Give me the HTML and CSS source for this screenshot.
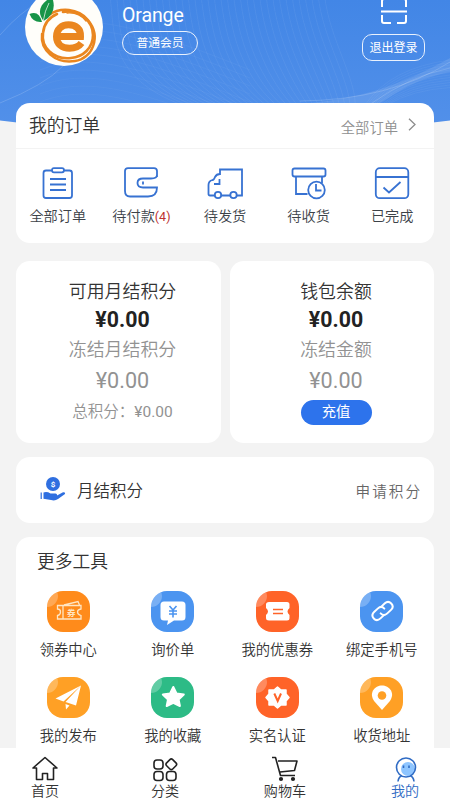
FILE: index.html
```html
<!DOCTYPE html>
<html lang="zh-CN">
<head>
<meta charset="utf-8">
<title>我的</title>
<link rel="stylesheet" href="styles.css">
</head>
<body>
<div class="page">
  <header class="hero">
    <svg class="hero-bg" viewBox="0 0 450 130" preserveAspectRatio="none">
      <defs>
        <linearGradient id="sky" x1="0" y1="0" x2="0" y2="1"><stop offset="0" stop-color="#4286e6"/><stop offset="1" stop-color="#5592ea"/></linearGradient>
        <clipPath id="dome"><path d="M0 0H450V120.500Q225 150 0 120.500Z"/></clipPath>
      </defs>
      <g clip-path="url(#dome)">
        <rect width="450" height="150" fill="url(#sky)"/>
        <g id="waves" fill="none" stroke="#fff" stroke-width=".6"></g>
        <path d="M310 103C360 98 400 86 450 58V72C410 80 390 98 375 106Z" fill="#fff" opacity=".1"/>
        <path d="M0 35Q20 12 42 0M0 103Q45 85 63 66M300 101Q390 100 450 62M372 103Q410 76 450 68" fill="none" stroke="#fff" stroke-width=".8" opacity=".2"/>
      </g>
    </svg>
    <div class="hero-row">
      <svg class="avatar" viewBox="0 0 78 78">
        <circle cx="39" cy="39" r="39" fill="#fffefa"/>
        <g fill="none" stroke="#ea861f" stroke-linecap="round">
          <path d="M24 27C35 19 53 20 63 32C77 49 67 71 50 73C30 76 15 62 17 46" stroke-width="2.4"/>
          <path d="M38 24C54 21 68 33 68 47C68 60 58 69 46 70C28 72 16 59 18 45C19 35 25 29 32 26" stroke-width="2.6"/>
          <path d="M57 70L65 65M42 25Q54 24 61 33" stroke-width="1.300"/>
          <path d="M33 48.500H55.500C56 41 51 36.800 43.500 36.800C36.500 36.800 31.500 41.500 31.500 48.500C31.500 56 37 60.300 44.500 60.300C50 60.300 54 58.500 56.500 55" stroke-width="7" stroke-linecap="butt"/>
        </g>
        <path d="M18.500 33C11.500 24 15 15 27 9Q33 25 18.500 33Z" fill="#189447"/>
        <path d="M4.500 26Q14 22 17 34Q8 35 4.500 26Z" fill="#189447"/>
        <path d="M18 34Q20 22 24 15" stroke="#fff" stroke-width=".7" fill="none"/>
      </svg>
      <div class="who"><div class="name">Orange</div><div class="level">普通会员</div></div>
      <div class="actions">
        <svg class="scan" viewBox="0 0 26 26" fill="none" stroke="#fff" stroke-width="2"><path d="M1 9V3Q1 1 3 1H10M16 1H23Q25 1 25 3V9M1 17V23Q1 25 3 25H10M16 25H23Q25 25 25 23V17M0 13.500H26"/></svg>
        <div class="logout">退出登录</div>
      </div>
    </div>
  </header>

  <section class="card orders">
    <div class="orders-head"><span class="title">我的订单</span><span class="more">全部订单<svg class="chev" viewBox="0 0 8 13" fill="none" stroke="#8d8d8d" stroke-width="1.300"><path d="M1 .8L7 6.500L1 12.200"/></svg></span></div>
    <div class="orders-grid">
      <div class="order"><svg viewBox="0 0 36 34"><path d="M12 4.500H6Q3.500 4.500 3.500 7V29.500Q3.500 32 6 32H29.500Q32 32 32 29.500V7Q32 4.500 29.500 4.500H24M14 2.200H22Q24 2.200 24 4.200T22 6.300H14Q12 6.300 12 4.200T14 2.200ZM10 13H26M10 18.500H26M10 24H26"/></svg><span>全部订单</span></div>
      <div class="order"><svg viewBox="0 0 36 34"><path d="M34 11V5Q34 2.200 31 2.200H5Q2 2.200 2 5V25Q2 30.500 7 30.500H25Q34 30.500 34 21.500Q32 21.500 29 21.500H20Q14.500 21.500 14.500 17T20 12.500H28Q34 12.500 34 9M20 15.500V18.500"/></svg><span>待付款<i>(4)</i></span></div>
      <div class="order"><svg viewBox="0 0 36 34"><path d="M8 29.500H3Q1.500 29.500 1.500 28V19Q1.500 15 5.500 14Q7 14 8 11Q9.500 8 13 8M13 9V3.500H35V29.500H30M23 29.500H14M12.500 13V18H7"/><circle cx="11" cy="29" r="3.200"/><circle cx="26.500" cy="29" r="3.200"/></svg><span>待发货</span></div>
      <div class="order"><svg viewBox="0 0 36 34"><path d="M3.500 2.500H32.500Q34.500 2.500 34.500 4.500V8.500Q34.500 10.500 32.500 10.500H3.500Q1.500 10.500 1.500 8.500V4.500Q1.500 2.500 3.500 2.500ZM5 10.500V28H16.500M31 10.500V17"/><circle cx="25.500" cy="24" r="8.300"/><path d="M25 18V24.500H30.500"/></svg><span>待收货</span></div>
      <div class="order"><svg viewBox="0 0 36 34"><rect x="1.800" y="2.200" width="32.500" height="30" rx="4"/><path d="M2 11H34M9.500 21.500L15 26.500L26.500 16"/></svg><span>已完成</span></div>
    </div>
  </section>

  <div class="balances">
    <section class="card balance">
      <div class="b-label">可用月结积分</div><div class="b-main">¥0.00</div>
      <div class="b-label dim">冻结月结积分</div><div class="b-sub">¥0.00</div>
      <div class="b-total">总积分：<span class="amount">¥0.00</span></div>
    </section>
    <section class="card balance">
      <div class="b-label">钱包余额</div><div class="b-main">¥0.00</div>
      <div class="b-label dim">冻结金额</div><div class="b-sub">¥0.00</div>
      <div class="topup">充值</div>
    </section>
  </div>

  <section class="card credit">
    <svg class="hand" viewBox="0 0 26 24" fill="#2f6fe0"><circle cx="13" cy="7" r="7"/><path d="M3.500 15.500Q7 14.300 10.500 16.500H15.500Q17.500 16.800 17 18.500L23 15.200Q25.500 14.800 25 17L18 22Q15 24.200 11 23L3.500 21.800ZM.6 15.500H1.800V22H.6Z"/><text x="13" y="10" font-size="8" font-weight="700" fill="#fff" text-anchor="middle">$</text></svg>
    <span class="credit-name">月结积分</span><span class="apply">申请积分</span>
  </section>

  <section class="card tools">
    <div class="title">更多工具</div>
    <div class="tools-grid">
      <div class="tool"><div class="tile orange"><svg viewBox="0 0 43 41"><g fill="none" stroke="#ffe6c4" stroke-width="1.300"><path d="M10.500 14.500H34V18Q30.500 18.500 30.500 21T34 24.500V28H10.500V24.500Q13.500 24 13.500 21T10.500 18ZM16 15V28M17 14L31 10.500L32.500 14"/></g><text x="24.300" y="25" font-size="8.500" font-weight="700" fill="#ffe6c4" text-anchor="middle">券</text></svg></div><span>领券中心</span></div>
      <div class="tool"><div class="tile blue"><svg viewBox="0 0 43 41"><path d="M13 10.500H31Q34.500 10.500 34.500 14V26Q34.500 29.500 31 29.500H23L16 34L17 29.500H13Q9.500 29.500 9.500 26V14Q9.500 10.500 13 10.500Z" fill="#fff"/><path d="M18.500 15L22 19L25.500 15M22 19V26.500M18 20H26M18 23H26" fill="none" stroke="#4b94f0" stroke-width="1.600"/></svg></div><span>询价单</span></div>
      <div class="tool"><div class="tile red"><svg viewBox="0 0 43 41"><path d="M13 11H31Q33.500 11 33.500 13.500V17Q29.500 20.500 33.500 24V27Q33.500 29.500 31 29.500H13Q10 29.500 10 27V24Q14 20.500 10 17V13.500Q10 11 13 11Z" fill="#fff"/><path d="M17 18.500H27M17 22.500H27" stroke="#ff6328" stroke-width="1.300"/></svg></div><span>我的优惠券</span></div>
      <div class="tool"><div class="tile blue"><svg viewBox="0 0 43 41"><g transform="rotate(-43 22.500 20)" fill="none" stroke="#fff" stroke-width="2" stroke-linecap="round"><path d="M20 24H16Q11 24 11 19.500T16 15H21Q25.500 15 25.500 19.500"/><path d="M25 16H29.500Q34 16 34 20.500T29.500 25H24Q19.500 25 19.500 20.500"/></g></svg></div><span>绑定手机号</span></div>
      <div class="tool"><div class="tile amber"><svg viewBox="0 0 43 41" fill="#fff"><path d="M34 8.500L8.500 21.500L16.500 24.500ZM34 8.500L18.500 25L29 28.500ZM18.500 27L22.500 28.500L19 32.500Z"/></svg></div><span>我的发布</span></div>
      <div class="tool"><div class="tile green"><svg viewBox="0 0 43 41"><path d="M22.300 10L25.500 16.500L32.800 17.600L27.600 22.500L28.900 29L22.300 25.800L15.700 29L17 22.500L11.800 17.600L19.100 16.500Z" fill="#fff" stroke="#fff" stroke-width="2" stroke-linejoin="round"/></svg></div><span>我的收藏</span></div>
      <div class="tool"><div class="tile red"><svg viewBox="0 0 43 41"><path d="M21.500 10L25 13H30V17L33 20.500L30 24V28H25L21.500 31L18 28H13V24L10 20.500L13 17V13H18Z" fill="#fff" stroke="#fff" stroke-width="1.500" stroke-linejoin="round"/><path d="M18.300 16.500L21.700 24L25 16.500" fill="none" stroke="#ff6328" stroke-width="2"/></svg></div><span>实名认证</span></div>
      <div class="tool"><div class="tile amber"><svg viewBox="0 0 43 41"><path d="M22 33L14.500 24.500C8 16 15 8.500 22 8.500S36 16 29.500 24.500Z" fill="#fff"/><circle cx="22" cy="18.500" r="4.300" fill="#ffa025"/></svg></div><span>收货地址</span></div>
    </div>
  </section>
</div>

<nav class="tabs">
  <div class="tab"><svg viewBox="0 0 26 26"><path d="M13 1.500L1 12H4.500V23.500H10.500V17.500H15.500V23.500H21.500V12H25Z"/></svg><span>首页</span></div>
  <div class="tab"><svg viewBox="0 0 26 26"><rect x="2" y="4" width="9" height="9" rx="3"/><rect x="2" y="15.500" width="9" height="9" rx="3"/><rect x="14.500" y="15.500" width="9.500" height="9" rx="3"/><rect x="15" y="4" width="8.600" height="8.600" rx="2" transform="rotate(45 19.300 8.300)"/></svg><span>分类</span></div>
  <div class="tab"><svg viewBox="0 0 26 26"><path d="M0 1.500H3.500L8.500 19.500H23M6 5H25L22.500 14.500L8 16"/><circle cx="9" cy="23" r="1.300" fill="#222"/><circle cx="21" cy="23" r="1.300" fill="#222"/></svg><span>购物车</span></div>
  <div class="tab active"><svg viewBox="0 0 26 26"><circle cx="16" cy="13" r="7" fill="#8ec5ff" stroke="none"/><circle cx="14" cy="11.500" r="9.500"/><path d="M10 19.500Q6.500 21 6 25.500M18 19.500Q21.500 21 22 25.500M11.500 9.500V12M17 9.500V12"/></svg><span>我的</span></div>
</nav>
<script src="waves.js"></script>
</body>
</html>
```
FILE: styles.css
```css
* { box-sizing: border-box; }
body {
  margin: 0;
  height: 800px;
  overflow: hidden;
  display: flex;
  flex-direction: column;
  background: #f3f3f3;
  color: #333;
  font-family: Roboto, "Noto Sans CJK SC", sans-serif;
  font-weight: 350;
}
svg { display: block; flex: none; }
.page { height: 748px; overflow: hidden; padding: 0 16px; }
.hero { position: relative; height: 103px; margin: 0 -16px; color: #fff; font-weight: 400; }
.hero-bg { position: absolute; left: 0; top: 0; width: 450px; height: 130px; }
.hero-row { position: relative; display: flex; align-items: flex-start; padding: 0 25px; }
.avatar { width: 78px; height: 78px; margin-top: -12px; }
.who { margin-left: 19px; flex: 1; }
.name { font-size: 19.5px; line-height: 24px; padding-top: 4px; height: 31px; letter-spacing: -.1px; }
.level {
  width: 76px; height: 24px; border: 1.5px solid #e9f1fd; border-radius: 12px;
  font-size: 11.8px; line-height: 22px; text-align: center;
}
.actions { display: flex; flex-direction: column; align-items: center; }
.scan { width: 26px; height: 26px; margin-top: -2px; }
.logout {
  width: 63px; height: 27px; margin-top: 10px; border: 1.5px solid #e9f1fd; border-radius: 10px;
  font-size: 12px; line-height: 26px; text-align: center;
}
.card { position: relative; background: #fff; border-radius: 14px; }
.title { font-size: 17.8px; line-height: 28px; }
.orders { height: 140px; }
.orders-head {
  display: flex; justify-content: space-between; align-items: center;
  height: 46px; padding: 1px 18px 0 13px; border-bottom: 1px solid #f3f3f3;
}
.more { display: flex; align-items: center; gap: 10px; font-size: 14.3px; color: #909090; }
.chev { width: 8px; height: 13px; margin-top: -3px; }
.orders-grid { display: grid; grid-template-columns: repeat(5, 1fr); padding-top: 17px; }
.order { display: flex; flex-direction: column; align-items: center; font-size: 14.2px; line-height: 22px; color: #3c4248; white-space: nowrap; }
.order svg { width: 36px; height: 34px; margin-bottom: 5px; fill: none; stroke: #3772d2; stroke-width: 1.8; }
.order i { font-style: normal; font-weight: 400; font-size: 12.5px; color: #bd3030; }
.balances { display: grid; grid-template-columns: 205px 204px; justify-content: space-between; margin-top: 18px; }
.balance { height: 182px; padding: 18px 0 0 8px; display: flex; flex-direction: column; align-items: center; }
.b-label { font-size: 17.9px; line-height: 26px; }
.b-main { font-size: 21.3px; font-weight: 700; line-height: 29px; color: #222; }
.b-label.dim { color: #929292; margin-top: 3px; }
.b-sub { font-size: 21.6px; font-weight: 400; line-height: 30px; color: #929292; margin-top: 3px; }
.b-total { font-size: 15.5px; line-height: 24px; color: #929292; margin-top: 4px; }
.amount { font-weight: 400; }
.topup { width: 71px; height: 25px; margin-top: 4px; border-radius: 13px; background: #2d73ec; color: #fff; font-size: 14.3px; font-weight: 400; line-height: 25px; text-align: center; }
.credit { display: flex; align-items: center; height: 66px; margin-top: 14px; padding: 0 12px 0 24px; }
.hand { width: 26px; height: 24px; margin-top: -2px; }
.credit-name { font-size: 16.5px; margin-left: 11px; flex: 1; }
.apply { font-size: 14.6px; letter-spacing: 2px; color: #666; }
.tools { height: 230px; margin-top: 14px; padding-top: 11px; }
.tools .title { padding-left: 21px; }
.tools-grid { display: grid; grid-template-columns: repeat(4, 1fr); row-gap: 15px; margin-top: 15px; }
.tool { display: flex; flex-direction: column; align-items: center; font-size: 14.3px; line-height: 22px; height: 71px; white-space: nowrap; }
.tile { position: relative; width: 43px; height: 41px; margin-bottom: 7px; border-radius: 16px; overflow: hidden; }
.tile::before { content: ""; position: absolute; left: -11px; top: -6px; width: 22px; height: 22px; border-radius: 50%; background: rgba(255, 255, 255, .25); }
.tile svg { width: 43px; height: 41px; }
.orange { background: #ff8b1b; }
.blue { background: #4b94f0; }
.red { background: #ff6328; }
.amber { background: #ffa025; }
.green { background: #2dbb86; }
.tabs { display: grid; grid-template-columns: repeat(4, 120px); margin: 0 -15px; height: 52px; padding-top: 8px; background: #fff; position: relative; }
.tab { display: flex; flex-direction: column; align-items: center; font-size: 14.1px; line-height: 18px; }
.tab svg { width: 26px; height: 26px; fill: none; stroke: #222; stroke-width: 1.6; stroke-linejoin: round; }
.active { color: #2f6bc4; }
.active svg { stroke: #2f6bc4; }
```
FILE: waves.js
```javascript
// Fine wave lines across the header background.
const waves = document.getElementById('waves');
function addWave(d, opacity) {
  const path = document.createElementNS('http://www.w3.org/2000/svg', 'path');
  path.setAttribute('d', d);
  path.setAttribute('opacity', opacity);
  waves.appendChild(path);
}
for (let i = 0; i < 34; i++) {
  const x = 110 + i * 6.5;
  addWave(`M${x} -5C${x + 5} 40 ${x + i} 80 ${190 + i * 5} 108`, 0.1);
}
for (let i = 0; i < 12; i++) {
  const y = 20 + i * 8;
  addWave(`M40 ${y + 10}C90 ${y - 10} 150 ${y + 10} 250 ${y + 50}`, 0.07);
  addWave(`M${365 + i * 2} 105Q${390 + i * 2} ${68 + i * 2} 450 ${60 + i * 2.5}`, 0.09);
}
```
